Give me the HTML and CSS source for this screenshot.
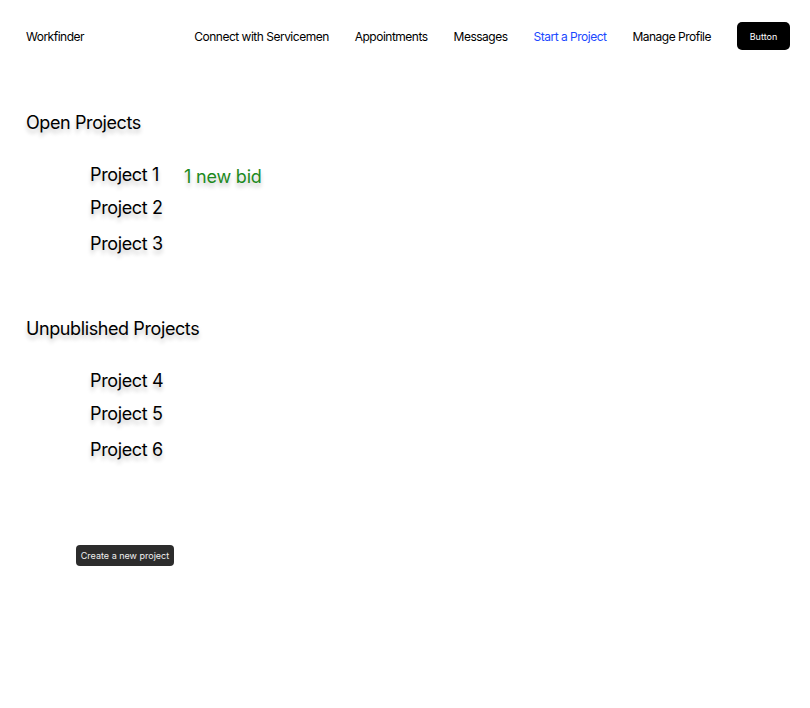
FILE: index.html
```html
<!DOCTYPE html>
<html>
<head>
<meta charset="utf-8">
<link rel="stylesheet" href="styles.css">
</head>
<body>
<header class="nav">
  <div class="brand">Workfinder</div>
  <nav class="links">
    <a class="link">Connect with Servicemen</a>
    <a class="link">Appointments</a>
    <a class="link">Messages</a>
    <a class="link active">Start a Project</a>
    <a class="link">Manage Profile</a>
    <button class="btn">Button</button>
  </nav>
</header>
<main class="main">
  <section class="group">
    <h2 class="heading">Open Projects</h2>
    <ul class="list">
      <li class="item item-1"><span class="name">Project 1</span><span class="bid">1 new bid</span></li>
      <li class="item item-2"><span class="name">Project 2</span></li>
      <li class="item item-3"><span class="name">Project 3</span></li>
    </ul>
  </section>
  <section class="group group-2">
    <h2 class="heading">Unpublished Projects</h2>
    <ul class="list">
      <li class="item item-1"><span class="name">Project 4</span></li>
      <li class="item item-2"><span class="name">Project 5</span></li>
      <li class="item item-3"><span class="name">Project 6</span></li>
    </ul>
  </section>
  <button class="create">Create a new project</button>
</main>
</body>
</html>
```
FILE: styles.css
```css
* { box-sizing: border-box; }
body {
  margin: 0;
  font-family: Inter, "Noto Sans", sans-serif;
  color: #000;
  background: #fff;
}
.nav {
  display: flex;
  align-items: center;
  justify-content: space-between;
  height: 72px;
  padding: 0 20px 0 26px;
}
.brand { font-size: 12px; letter-spacing: -0.5px; }
.links {
  display: flex;
  align-items: center;
  gap: 26px;
}
.link { font-size: 12px; letter-spacing: -0.5px; color: #000; }
.link.active { color: #1a48ff; }
.btn {
  width: 53px;
  height: 28px;
  background: #000;
  color: #fff;
  border: none;
  border-radius: 5px;
  font-family: inherit;
  font-size: 9px;
  padding: 0;
}
.main { padding: 39px 26px 0; }
.group { margin: 0; }
.group-2 { margin-top: 61px; }
.heading {
  margin: 0;
  font-size: 18px;
  font-weight: 400;
  letter-spacing: -0.4px;
  line-height: 24px;
  text-shadow: 0 4px 4px rgba(0,0,0,0.22);
}
.list {
  list-style: none;
  margin: 0;
  padding: 0 0 0 64px;
}
.item {
  display: flex;
  align-items: baseline;
  font-size: 18px;
  letter-spacing: -0.35px;
  line-height: 24px;
  text-shadow: 0 4px 4px rgba(0,0,0,0.22);
}
.item-1 { margin-top: 28px; }
.item-2 { margin-top: 9px; }
.item-3 { margin-top: 12px; }
.bid {
  color: #1d8a1d;
  margin-left: 25px;
  letter-spacing: -0.2px;
  position: relative;
  top: 2px;
}
.create {
  margin: 83px 0 0 50px;
  width: 98px;
  height: 21px;
  background: #2c2c2c;
  color: #f0f0f0;
  border: none;
  border-radius: 4px;
  font-family: inherit;
  font-size: 9px;
  padding: 0;
}
```
